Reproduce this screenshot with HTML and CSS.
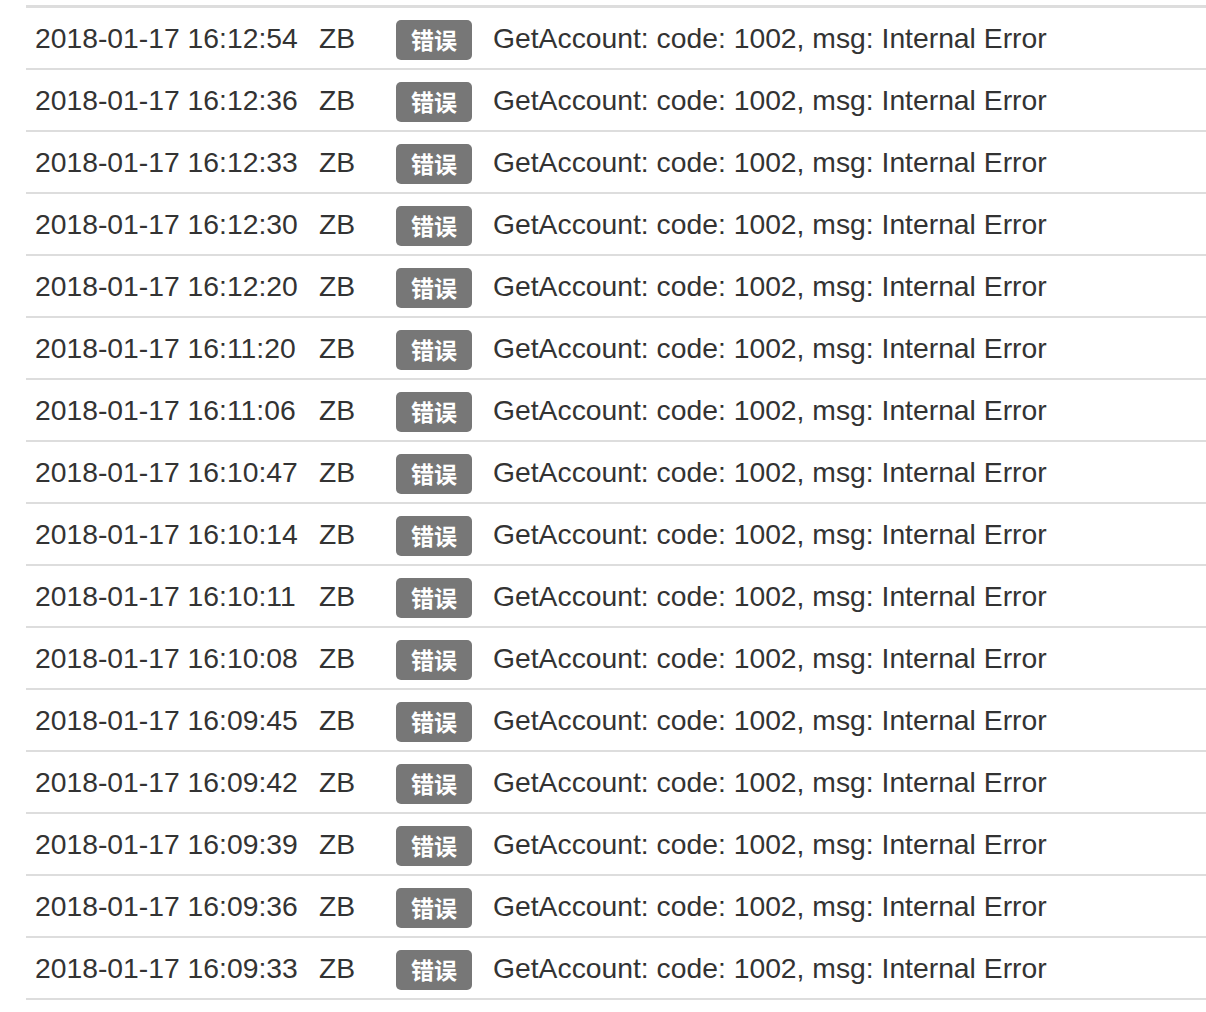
FILE: index.html
```html
<!DOCTYPE html>
<html>
<head>
<meta charset="utf-8">
<link rel="stylesheet" href="styles.css">
</head>
<body>
<div class="page">
  <div class="log">
    <div class="row"><span class="c-time">2018-01-17 16:12:54</span><span class="c-ex">ZB</span><span class="c-lv"><span class="badge">错误</span></span><span class="c-msg">GetAccount: code: 1002, msg: Internal Error</span></div>
    <div class="row"><span class="c-time">2018-01-17 16:12:36</span><span class="c-ex">ZB</span><span class="c-lv"><span class="badge">错误</span></span><span class="c-msg">GetAccount: code: 1002, msg: Internal Error</span></div>
    <div class="row"><span class="c-time">2018-01-17 16:12:33</span><span class="c-ex">ZB</span><span class="c-lv"><span class="badge">错误</span></span><span class="c-msg">GetAccount: code: 1002, msg: Internal Error</span></div>
    <div class="row"><span class="c-time">2018-01-17 16:12:30</span><span class="c-ex">ZB</span><span class="c-lv"><span class="badge">错误</span></span><span class="c-msg">GetAccount: code: 1002, msg: Internal Error</span></div>
    <div class="row"><span class="c-time">2018-01-17 16:12:20</span><span class="c-ex">ZB</span><span class="c-lv"><span class="badge">错误</span></span><span class="c-msg">GetAccount: code: 1002, msg: Internal Error</span></div>
    <div class="row"><span class="c-time">2018-01-17 16:11:20</span><span class="c-ex">ZB</span><span class="c-lv"><span class="badge">错误</span></span><span class="c-msg">GetAccount: code: 1002, msg: Internal Error</span></div>
    <div class="row"><span class="c-time">2018-01-17 16:11:06</span><span class="c-ex">ZB</span><span class="c-lv"><span class="badge">错误</span></span><span class="c-msg">GetAccount: code: 1002, msg: Internal Error</span></div>
    <div class="row"><span class="c-time">2018-01-17 16:10:47</span><span class="c-ex">ZB</span><span class="c-lv"><span class="badge">错误</span></span><span class="c-msg">GetAccount: code: 1002, msg: Internal Error</span></div>
    <div class="row"><span class="c-time">2018-01-17 16:10:14</span><span class="c-ex">ZB</span><span class="c-lv"><span class="badge">错误</span></span><span class="c-msg">GetAccount: code: 1002, msg: Internal Error</span></div>
    <div class="row"><span class="c-time">2018-01-17 16:10:11</span><span class="c-ex">ZB</span><span class="c-lv"><span class="badge">错误</span></span><span class="c-msg">GetAccount: code: 1002, msg: Internal Error</span></div>
    <div class="row"><span class="c-time">2018-01-17 16:10:08</span><span class="c-ex">ZB</span><span class="c-lv"><span class="badge">错误</span></span><span class="c-msg">GetAccount: code: 1002, msg: Internal Error</span></div>
    <div class="row"><span class="c-time">2018-01-17 16:09:45</span><span class="c-ex">ZB</span><span class="c-lv"><span class="badge">错误</span></span><span class="c-msg">GetAccount: code: 1002, msg: Internal Error</span></div>
    <div class="row"><span class="c-time">2018-01-17 16:09:42</span><span class="c-ex">ZB</span><span class="c-lv"><span class="badge">错误</span></span><span class="c-msg">GetAccount: code: 1002, msg: Internal Error</span></div>
    <div class="row"><span class="c-time">2018-01-17 16:09:39</span><span class="c-ex">ZB</span><span class="c-lv"><span class="badge">错误</span></span><span class="c-msg">GetAccount: code: 1002, msg: Internal Error</span></div>
    <div class="row"><span class="c-time">2018-01-17 16:09:36</span><span class="c-ex">ZB</span><span class="c-lv"><span class="badge">错误</span></span><span class="c-msg">GetAccount: code: 1002, msg: Internal Error</span></div>
    <div class="row"><span class="c-time">2018-01-17 16:09:33</span><span class="c-ex">ZB</span><span class="c-lv"><span class="badge">错误</span></span><span class="c-msg">GetAccount: code: 1002, msg: Internal Error</span></div>
  </div>
</div>
</body>
</html>
```
FILE: styles.css
```css
html, body {
  margin: 0;
  padding: 0;
  background: #fff;
}
.page {
  padding: 5px 0 0 26px;
  font-family: "Liberation Sans", Arial, "Noto Sans CJK SC", sans-serif;
  font-size: 28.3px;
  color: #333;
}
.log {
  border-top: 3px solid #ddd;
}
.row {
  display: grid;
  grid-template-columns: 284px 77px 97px 1fr;
  align-items: center;
  height: 60px;
  border-bottom: 2px solid #ddd;
  white-space: nowrap;
}
.row > span {
  padding-left: 9px;
  padding-top: 1px;
}
.row > .c-lv {
  display: flex;
  align-items: center;
  padding-top: 3px;
}
.badge {
  display: inline-flex;
  align-items: center;
  justify-content: center;
  width: 76px;
  height: 40px;
  background: #777;
  color: #fff;
  border-radius: 5px;
  font-family: "Noto Sans CJK SC", sans-serif;
  font-weight: 700;
  font-size: 23px;
  line-height: 1;
}
```
